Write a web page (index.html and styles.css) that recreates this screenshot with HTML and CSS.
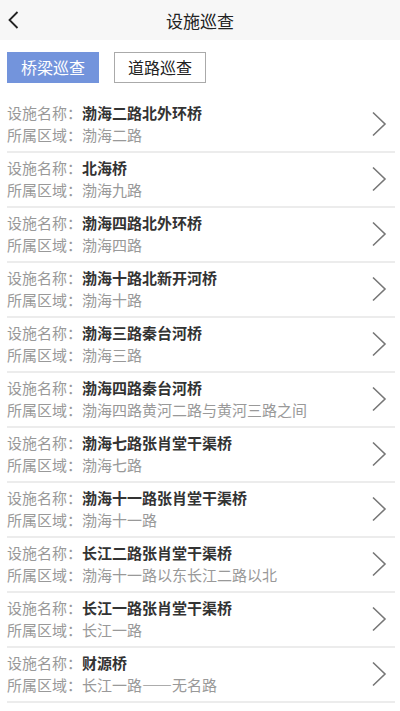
FILE: index.html
```html
<!DOCTYPE html>
<html lang="zh-CN">
<head>
    <meta charset="UTF-8">
    <meta name="viewport" content="width=device-width, initial-scale=1.0">
    <title>设施巡查</title>
    <link rel="stylesheet" href="styles.css">
</head>
<body>
    <div class="header">
        <span class="back">
            <svg width="11" height="18" viewBox="0 0 11 18"><polyline points="9.5,1 1.5,9 9.5,17" fill="none" stroke="#222" stroke-width="1.8"/></svg>
        </span>
        <h1>设施巡查</h1>
    </div>
    <div class="tabs">
        <button class="tab active">桥梁巡查</button>
        <button class="tab">道路巡查</button>
    </div>
    <ul class="list" id="list"></ul>

    <script>
        // Facility list
        const items = [
            ['渤海二路北外环桥', '渤海二路'],
            ['北海桥', '渤海九路'],
            ['渤海四路北外环桥', '渤海四路'],
            ['渤海十路北新开河桥', '渤海十路'],
            ['渤海三路秦台河桥', '渤海三路'],
            ['渤海四路秦台河桥', '渤海四路黄河二路与黄河三路之间'],
            ['渤海七路张肖堂干渠桥', '渤海七路'],
            ['渤海十一路张肖堂干渠桥', '渤海十一路'],
            ['长江二路张肖堂干渠桥', '渤海十一路以东长江二路以北'],
            ['长江一路张肖堂干渠桥', '长江一路'],
            ['财源桥', '长江一路——无名路'],
            ['黄河五路桥', '黄河五路']
        ];

        const chevron = '<svg width="16" height="26" viewBox="0 0 16 26"><polyline points="2,1.5 14,13 2,24.5" fill="none" stroke="#777" stroke-width="1.6"/></svg>';

        const list = document.getElementById('list');
        items.forEach(item => {
            const li = document.createElement('li');
            li.className = 'item';
            li.innerHTML = `
                <div class="info">
                    <div class="line"><span class="label">设施名称：</span><span class="name">${item[0]}</span></div>
                    <div class="line"><span class="label">所属区域：</span><span class="area">${item[1]}</span></div>
                </div>
                <span class="arrow">${chevron}</span>
            `;
            list.appendChild(li);
        });
    </script>
</body>
</html>
```

FILE: styles.css
```css
body {
    margin: 0;
    font-family: "Noto Sans CJK SC", "Noto Sans", sans-serif;
    background-color: #fff;
    color: #222;
}
.header {
    height: 40px;
    background-color: #f7f7f7;
    display: flex;
    align-items: center;
    justify-content: center;
    position: relative;
}
.header h1 {
    margin: 0;
    font-size: 17px;
    font-weight: normal;
    color: #222;
}
.back {
    position: absolute;
    left: 8px;
    top: 10px;
}
.tabs {
    padding: 12px 7px 0;
    display: flex;
    gap: 15px;
}
.tab {
    width: 92px;
    height: 31px;
    padding: 0;
    font-family: inherit;
    font-size: 16px;
    line-height: 29px;
    background-color: #fff;
    color: #222;
    border: 1px solid #aaa;
}
.tab.active {
    background-color: #7394dc;
    border-color: #7394dc;
    color: #fff;
}
.list {
    list-style: none;
    margin: 15px 5px 0 7px;
    padding: 0;
}
.item {
    display: flex;
    align-items: center;
    padding: 4px 8px 5px 0;
    border-bottom: 2px solid #ececec;
}
.info {
    flex: 1;
}
.line {
    font-size: 15px;
    line-height: 22px;
    white-space: nowrap;
}
.label {
    color: #999;
}
.name {
    color: #333;
    font-weight: bold;
}
.area {
    color: #999;
}
.arrow {
    display: flex;
}
```
